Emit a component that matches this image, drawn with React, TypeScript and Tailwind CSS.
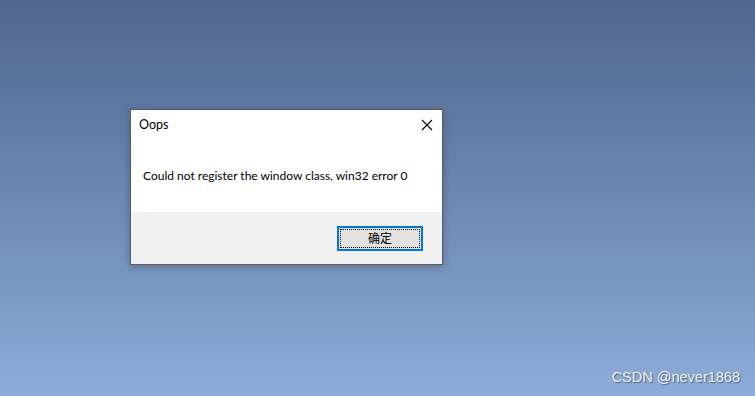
export default function App() {
  return (
    <div className="relative w-[755px] h-[396px] overflow-hidden bg-gradient-to-b from-[#4f6690] to-[#8dacd7] pt-[109px] pl-[130px] font-['Lato','Noto_Sans_CJK_SC',sans-serif]">
      <div className="w-[313px] h-[156px] border border-[#5b5b5b] bg-white flex flex-col shadow-[0_2px_8px_rgba(0,0,0,0.25)]">
        <div className="h-[30px] flex items-center justify-between pl-[8px] pr-[9px]">
          <span className="text-[12.5px] text-black leading-none">Oops</span>
          <svg width="12" height="12" viewBox="0 0 12 12" className="text-black">
            <path d="M1 1 L11 11 M11 1 L1 11" stroke="currentColor" strokeWidth="1.1" />
          </svg>
        </div>
        <div className="h-[72px] flex items-center pl-[12px]">
          <span className="text-[12px] text-black">Could not register the window class, win32 error 0</span>
        </div>
        <div className="flex-1 bg-[#f0f0f0] flex items-center justify-end pr-[19px]">
          <button className="w-[86px] h-[25px] border-2 border-[#0078d7] bg-[#e1e1e1] p-px">
            <span className="flex h-full w-full items-center justify-center border border-dotted border-black text-[12px] text-black font-['Noto_Sans_CJK_SC',sans-serif]">
              确定
            </span>
          </button>
        </div>
      </div>
      <div className="absolute right-[15px] bottom-[7px] text-[14.5px] text-[#eef2f8] font-['Liberation_Sans',sans-serif] [text-shadow:1px_1px_1px_rgba(40,50,70,0.6)]">
        CSDN @never1868
      </div>
    </div>
  );
}
